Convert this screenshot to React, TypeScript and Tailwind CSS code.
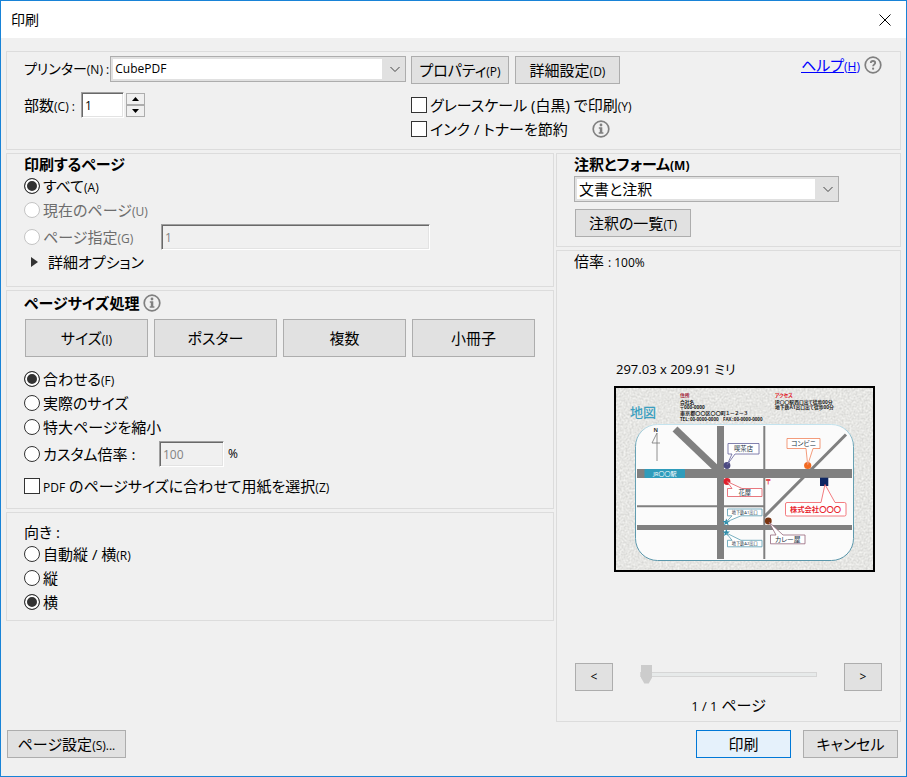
import { useState, type ReactNode } from "react";
import { clsx } from "clsx";

function Key(props: { children: ReactNode }) {
  return <span className="text-xs">({props.children})</span>;
}

function Panel(props: { children: ReactNode; className?: string }) {
  return (
    <section
      className={clsx("border border-[#dcdcdc] px-[17px]", props.className)}
    >
      {props.children}
    </section>
  );
}

function PushButton(props: {
  children: ReactNode;
  className?: string;
  primary?: boolean;
}) {
  return (
    <button
      type="button"
      className={clsx(
        "flex shrink-0 items-center justify-center border whitespace-nowrap",
        props.primary
          ? "border-[#0078d7] bg-[#e5f1fb]"
          : "border-[#adadad] bg-[#e1e1e1]",
        props.className,
      )}
    >
      <span>{props.children}</span>
    </button>
  );
}

function Radio(props: {
  name: string;
  value: string;
  checked: boolean;
  onChange: (value: string) => void;
  disabled?: boolean;
  className?: string;
  children: ReactNode;
}) {
  return (
    <label
      className={clsx(
        "flex items-center gap-[3px]",
        props.disabled && "text-[#6d6d6d]",
        props.className ?? "h-6",
      )}
    >
      <input
        type="radio"
        name={props.name}
        value={props.value}
        checked={props.checked}
        disabled={props.disabled}
        onChange={() => props.onChange(props.value)}
        className="size-4 shrink-0 appearance-none rounded-full border border-[#333] bg-white checked:bg-[#333] checked:shadow-[inset_0_0_0_2px_#fff] disabled:border-[#c4c4c4]"
      />
      <span>{props.children}</span>
    </label>
  );
}

function CheckBox(props: { children: ReactNode; className?: string }) {
  return (
    <label
      className={clsx("flex items-center gap-[3px]", props.className ?? "h-6")}
    >
      <input
        type="checkbox"
        className="size-4 shrink-0 appearance-none border border-[#333] bg-white checked:bg-[#333] checked:shadow-[inset_0_0_0_3px_#fff]"
      />
      <span>{props.children}</span>
    </label>
  );
}

function ComboBox(props: {
  id: string;
  options: string[];
  className?: string;
  textClass?: string;
}) {
  return (
    <div
      className={clsx(
        "relative border border-[#adadad] bg-[#e1e1e1] p-[2px] pr-[23px]",
        props.className,
      )}
    >
      <select
        id={props.id}
        className={clsx(
          "block h-5 w-full appearance-none bg-white px-[2px] leading-5",
          props.textClass,
        )}
      >
        {props.options.map((option) => (
          <option key={option}>{option}</option>
        ))}
      </select>
      <svg
        className="pointer-events-none absolute top-2 right-1 h-2 w-3"
        viewBox="0 0 12 8"
        fill="none"
        stroke="#444"
      >
        <path d="M1.5 2 6 6.5 10.5 2" />
      </svg>
    </div>
  );
}

const sunken =
  "h-[26px] border border-t-[#a0a0a0] border-r-white border-b-white border-l-[#a0a0a0] px-[3px] shadow-[inset_1px_1px_0_#696969,inset_-1px_-1px_0_#e3e3e3]";

function InfoIcon() {
  return (
    <svg className="size-[18px] shrink-0" viewBox="0 0 18 18" fill="#808080">
      <circle cx="9" cy="9" r="7.8" fill="none" stroke="#808080" strokeWidth="1.7" />
      <circle cx="9" cy="5" r="1.4" />
      <path d="M6.8 7.3h3.5v4.9h1.1v1.5H6.7v-1.5h1.1V8.7h-1z" />
    </svg>
  );
}

function HelpIcon() {
  return (
    <svg className="size-[18px]" viewBox="0 0 18 18" fill="none" stroke="#808080">
      <circle cx="9" cy="9" r="7.8" strokeWidth="1.7" />
      <path
        d="M6.8 7.1c0-1.3.9-2.1 2.2-2.1s2.2.7 2.2 1.9c0 1.4-2.1 1.6-2.1 3.4"
        strokeWidth="1.8"
      />
      <circle cx="9.1" cy="12.7" r="1.1" fill="#808080" stroke="none" />
    </svg>
  );
}

function MapPreview() {
  return (
    <svg
      className="h-[186px] w-[261px]"
      viewBox="0 0 261 186"
      role="img"
      aria-label="地図"
    >
      <defs>
        <filter
          id="paper"
          x="0"
          y="0"
          width="100%"
          height="100%"
          colorInterpolationFilters="sRGB"
        >
          <feTurbulence type="fractalNoise" baseFrequency="0.5" numOctaves="2" />
          <feColorMatrix values="0.2 0 0 0 0.8  0.2 0 0 0 0.8  0.2 0 0 0 0.79  0 0 0 0 1" />
        </filter>
        <linearGradient id="frame" x1="0" y1="0" x2="0" y2="1">
          <stop offset="0" stopColor="#c4e3ee" />
          <stop offset="0.15" stopColor="#6aa3b5" />
          <stop offset="1" stopColor="#5b97ab" />
        </linearGradient>
      </defs>
      <rect width="261" height="186" fill="#e6e6e4" />
      <rect width="261" height="186" filter="url(#paper)" />
      <rect x="1" y="1" width="259" height="184" fill="none" stroke="#000" strokeWidth="2" />

      <text x="16" y="30.5" fontSize="13" fontWeight="500" fill="#3b9fc0">
        地図
      </text>
      <g fontSize="4.8" fontWeight="700" fill="#222">
        <text x="66" y="11" fill="#a0102c">住所</text>
        <text x="66" y="18">会社名</text>
        <text x="66" y="23">〒000-0000</text>
        <text x="66" y="29" fontSize="5.1">東京都〇〇区〇〇町１－２－３</text>
        <text x="66" y="35" fontSize="4.5">TEL：00-0000-0000　FAX：00-0000-0000</text>
        <text x="161" y="11" fill="#e01020">アクセス</text>
        <text x="161" y="18">JR〇〇駅西口出て徒歩00分</text>
        <text x="161" y="23">地下鉄A1出口出て徒歩00分</text>
      </g>

      <rect x="21.5" y="38.5" width="218" height="136" rx="22" fill="#fbfbfb" stroke="url(#frame)" />
      <g fill="none" stroke="#808080">
        <path d="M23 87.4h215" strokeWidth="9" />
        <path d="M23 120.3h127" strokeWidth="2" />
        <path d="M23 141.4h215" strokeWidth="5" />
        <path d="M106.5 40v133" strokeWidth="7" />
        <path d="M150.3 40v133" strokeWidth="2" />
        <path d="M61 43 106 86" strokeWidth="7" />
        <path d="M232 48.5 150.5 130.5" strokeWidth="3" />
      </g>
      <text x="39.5" y="46" fontSize="5.5" fontWeight="700" fill="#333">N</text>
      <path d="M43 75V47L38 57h8" fill="none" stroke="#777" strokeWidth="0.8" />

      <rect x="30.5" y="83" width="40.5" height="9" rx="1" fill="#2f9cbb" />
      <text x="50.8" y="89.8" fontSize="6" fill="#fff" textAnchor="middle">JR〇〇駅</text>

      <circle cx="113" cy="79.5" r="3.4" fill="#4c4a80" />
      <circle cx="113" cy="95.5" r="3.4" fill="#e01f2c" />
      <circle cx="193.7" cy="79.5" r="3.6" fill="#f26a21" />
      <circle cx="154.3" cy="135" r="3.4" fill="#7a3410" />
      <rect x="206" y="91.7" width="8.3" height="8.3" fill="#0d2663" />
      <text x="151.5" y="98" fontSize="6.5" fontWeight="700" fill="#e01f2c">〒</text>
      <g fill="#2b8dab">
        <path d="m112.3 132.4 1 2.6h2.7l-2.2 1.7.9 2.8-2.4-1.7-2.4 1.7.9-2.8-2.2-1.7h2.7z" />
        <path d="m112.3 143 1 2.6h2.7l-2.2 1.7.9 2.8-2.4-1.7-2.4 1.7.9-2.8-2.2-1.7h2.7z" />
      </g>

      <g fill="#fff" strokeWidth="0.8" strokeLinejoin="round">
        <path d="M114 57.5h31v10.5h-24L113 79l5-11h-4z" stroke="#62619a" />
        <path d="M173 52.5h33v10h-7L193.7 79 192 62.5h-19z" stroke="#f0835a" />
        <path d="M113.5 102.5h4.5l-5-7 15 7h20v8h-34.5z" stroke="#e2565e" />
        <path d="M113.5 123h34.5v6.8h-21l-14.7 6.2 5.7-6.2h-4.5z" stroke="#559bb0" />
        <path d="M113.5 154.3h4.5l-5.7-7.3 14.7 7.3h21v6.5h-34.5z" stroke="#559bb0" />
        <path d="M156.5 149h5.5l-7-13 14 13h22v8.8h-34.5z" stroke="#94667a" />
        <path d="M173 116.5h34l4-18 10 18h9.5q1.5 0 1.5 1.5v10.5q0 1.5-1.5 1.5H173q-1.5 0-1.5-1.5V118q0-1.5 1.5-1.5z" stroke="#f05a60" />
      </g>
      <g fill="#234" textAnchor="middle">
        <text x="129.5" y="65" fontSize="6.3">喫茶店</text>
        <text x="189.5" y="59.8" fontSize="6.8">コンビニ</text>
        <text x="130.7" y="108.8" fontSize="6.3">花屋</text>
        <text x="130.7" y="128" fontSize="4.2">地下鉄A1出口</text>
        <text x="130.7" y="159.2" fontSize="4.2">地下鉄A2出口</text>
        <text x="173.7" y="155.7" fontSize="6.8">カレー屋</text>
        <text x="201.5" y="126" fontSize="7.3" fontWeight="700" fill="#e8262f">
          株式会社〇〇〇
        </text>
      </g>
    </svg>
  );
}

function PrinterPanel() {
  const [copies, setCopies] = useState(1);

  return (
    <Panel className="flex h-[99px] gap-[5px] pt-1">
      <div className="flex w-[382px] flex-col gap-[10px]">
        <div className="flex items-center gap-px">
          <label htmlFor="printer" className="text-sm whitespace-nowrap">
            プリンター<Key>N</Key>
            <span className="text-xs"> :</span>
          </label>
          <ComboBox
            id="printer"
            options={["CubePDF"]}
            className="flex-1"
            textClass="text-xs"
          />
        </div>
        <div className="flex items-center">
          <label htmlFor="copies" className="w-[57px] whitespace-nowrap">
            部数<Key>C</Key>
            <span className="text-xs"> :</span>
          </label>
          <input
            id="copies"
            value={copies}
            onChange={(e) => setCopies(Number(e.target.value) || 1)}
            className={clsx(sunken, "w-[43px] bg-white text-xs")}
          />
          <div className="ml-[2px] flex flex-col">
            <button
              type="button"
              aria-label="部数を増やす"
              onClick={() => setCopies(copies + 1)}
              className="flex h-3 w-[19px] items-center justify-center border border-[#adadad] bg-[#f0f0f0]"
            >
              <svg className="h-1 w-[7px]" viewBox="0 0 7 4">
                <path d="M0 4 3.5 0 7 4z" />
              </svg>
            </button>
            <button
              type="button"
              aria-label="部数を減らす"
              onClick={() => setCopies(Math.max(1, copies - 1))}
              className="flex h-3 w-[19px] items-center justify-center border border-[#adadad] bg-[#f0f0f0]"
            >
              <svg className="h-1 w-[7px]" viewBox="0 0 7 4">
                <path d="M0 0h7L3.5 4z" />
              </svg>
            </button>
          </div>
        </div>
      </div>
      <div className="flex-1">
        <div className="mb-[9px] flex gap-[6px]">
          <PushButton className="h-7 w-[98px]">
            プロパティ<Key>P</Key>
          </PushButton>
          <PushButton className="h-7 w-[105px]">
            詳細設定<Key>D</Key>
          </PushButton>
        </div>
        <CheckBox>
          グレースケール (白黒) で印刷<Key>Y</Key>
        </CheckBox>
        <div className="flex items-center gap-6">
          <CheckBox>インク / トナーを節約</CheckBox>
          <InfoIcon />
        </div>
      </div>
      <div className="flex h-[18px] items-center gap-1 pr-px">
        <a href="#help" className="text-[#0000ff] underline">
          ヘルプ<Key>H</Key>
        </a>
        <HelpIcon />
      </div>
    </Panel>
  );
}

function PageRangePanel() {
  const [range, setRange] = useState("all");

  return (
    <Panel className="pb-[14px]">
      <h2 className="h-5 font-bold">印刷するページ</h2>
      <Radio name="range" value="all" checked={range === "all"} onChange={setRange}>
        すべて<Key>A</Key>
      </Radio>
      <Radio
        name="range"
        value="current"
        checked={range === "current"}
        onChange={setRange}
        disabled
      >
        現在のページ<Key>U</Key>
      </Radio>
      <div className="flex h-[30px] items-center">
        <Radio
          name="range"
          value="pages"
          checked={range === "pages"}
          onChange={setRange}
          disabled
          className="h-6 w-[137px]"
        >
          ページ指定<Key>G</Key>
        </Radio>
        <input
          aria-label="ページ指定"
          disabled
          defaultValue="1"
          className={clsx(sunken, "w-[269px] bg-[#f0f0f0] text-xs text-[#838383]")}
        />
      </div>
      <button type="button" className="flex h-5 items-center gap-[9px] pl-[6px]">
        <svg className="h-3 w-[9px]" viewBox="0 0 9 12" fill="#333">
          <path d="M1 1v10l7-5z" />
        </svg>
        詳細オプション
      </button>
    </Panel>
  );
}

function PageSizePanel() {
  const [sizing, setSizing] = useState("fit");

  return (
    <Panel className="pb-[5px]">
      <div className="flex h-6 items-center gap-1">
        <h2 className="font-bold">ページサイズ処理</h2>
        <InfoIcon />
      </div>
      <div className="mx-px mt-1 mb-[10px] grid grid-cols-4 gap-[6px]">
        <PushButton className="h-[38px]">
          サイズ<Key>I</Key>
        </PushButton>
        <PushButton className="h-[38px]">ポスター</PushButton>
        <PushButton className="h-[38px]">複数</PushButton>
        <PushButton className="h-[38px]">小冊子</PushButton>
      </div>
      <Radio name="sizing" value="fit" checked={sizing === "fit"} onChange={setSizing}>
        合わせる<Key>F</Key>
      </Radio>
      <Radio
        name="sizing"
        value="actual"
        checked={sizing === "actual"}
        onChange={setSizing}
      >
        実際のサイズ
      </Radio>
      <Radio
        name="sizing"
        value="shrink"
        checked={sizing === "shrink"}
        onChange={setSizing}
      >
        特大ページを縮小
      </Radio>
      <div className="flex h-[30px] items-center">
        <Radio
          name="sizing"
          value="custom"
          checked={sizing === "custom"}
          onChange={setSizing}
          className="h-6 w-[135px]"
        >
          カスタム倍率 :
        </Radio>
        <input
          aria-label="カスタム倍率"
          disabled={sizing !== "custom"}
          defaultValue="100"
          className={clsx(sunken, "w-[65px] bg-[#f0f0f0] text-xs text-[#838383]")}
        />
        <span className="ml-1 text-xs">%</span>
      </div>
      <CheckBox className="h-[34px]">
        <span className="text-xs">PDF</span> のページサイズに合わせて用紙を選択
        <Key>Z</Key>
      </CheckBox>
    </Panel>
  );
}

function OrientationPanel() {
  const [orientation, setOrientation] = useState("landscape");

  return (
    <Panel className="pt-[9px] pb-[6px]">
      <h2 className="h-5">向き :</h2>
      <Radio
        name="orientation"
        value="auto"
        checked={orientation === "auto"}
        onChange={setOrientation}
      >
        自動縦 / 横<Key>R</Key>
      </Radio>
      <Radio
        name="orientation"
        value="portrait"
        checked={orientation === "portrait"}
        onChange={setOrientation}
      >
        縦
      </Radio>
      <Radio
        name="orientation"
        value="landscape"
        checked={orientation === "landscape"}
        onChange={setOrientation}
      >
        横
      </Radio>
    </Panel>
  );
}

function CommentsPanel() {
  return (
    <Panel className="pb-[9px]">
      <h2 className="h-5 font-bold">
        <label htmlFor="comments">
          注釈とフォーム<Key>M</Key>
        </label>
      </h2>
      <ComboBox
        id="comments"
        options={["文書と注釈"]}
        className="mt-[2px] mb-[7px] w-[265px]"
      />
      <PushButton className="ml-px h-7 w-[116px]">
        注釈の一覧<Key>T</Key>
      </PushButton>
    </Panel>
  );
}

function PreviewPanel() {
  return (
    <Panel className="flex flex-1 flex-col">
      <p className="h-5">
        倍率 <span className="text-xs">: 100%</span>
      </p>
      <figure className="flex flex-1 flex-col items-end justify-center pr-2 pt-2 pb-3">
        <figcaption className="mb-[7px] h-5 w-[259px] text-[13px] leading-5">
          297.03 x 209.91 ミリ
        </figcaption>
        <MapPreview />
      </figure>
      <div className="flex items-center px-px">
        <PushButton className="h-7 w-[38px] text-xs">&lt;</PushButton>
        <input
          type="range"
          aria-label="ページ"
          min={1}
          max={2}
          defaultValue={1}
          disabled
          className="mx-[27px] mb-[6px] h-5 min-w-0 flex-1 appearance-none bg-transparent [&::-webkit-slider-runnable-track]:h-[5px] [&::-webkit-slider-runnable-track]:border [&::-webkit-slider-runnable-track]:border-[#d6d6d6] [&::-webkit-slider-runnable-track]:bg-[#e7eaea] [&::-webkit-slider-thumb]:-mt-2 [&::-webkit-slider-thumb]:h-[19px] [&::-webkit-slider-thumb]:w-[11px] [&::-webkit-slider-thumb]:appearance-none [&::-webkit-slider-thumb]:bg-[#ccc] [&::-webkit-slider-thumb]:[clip-path:polygon(0_0,100%_0,100%_70%,70%_100%,30%_100%,0_70%)]"
        />
        <PushButton className="h-7 w-[38px] text-xs">&gt;</PushButton>
      </div>
      <p className="mt-1 mb-[6px] h-5 text-center">
        <span className="text-[13px]">1 / 1</span> ページ
      </p>
    </Panel>
  );
}

export default function App() {
  return (
    <main className="flex min-h-screen flex-col border border-[#1883d7] bg-[#f0f0f0] font-['Open_Sans','Noto_Sans_CJK_JP',sans-serif] text-[15px] leading-5 text-black [font-feature-settings:'palt']">
      <header className="flex h-[37px] items-center justify-between bg-white pr-[15px] pl-[10px]">
        <h1 className="text-sm">印刷</h1>
        <button type="button" aria-label="閉じる">
          <svg className="size-3" viewBox="0 0 12 12" stroke="#000">
            <path d="m.5.5 11 11m0-11-11 11" />
          </svg>
        </button>
      </header>
      <div className="flex flex-1 flex-col px-[5px] pt-[13px]">
        <PrinterPanel />
        <div className="mt-[3px] grid flex-1 grid-cols-[548fr_345fr] gap-[2px]">
          <div className="flex flex-col gap-[3px]">
            <PageRangePanel />
            <PageSizePanel />
            <OrientationPanel />
          </div>
          <div className="flex flex-col gap-[3px]">
            <CommentsPanel />
            <PreviewPanel />
          </div>
        </div>
      </div>
      <footer className="flex pt-2 pr-2 pb-[18px] pl-[6px]">
        <PushButton className="h-7 w-[119px]">
          ページ設定<Key>S</Key>
          <span className="text-xs">...</span>
        </PushButton>
        <div className="ml-auto flex gap-3">
          <PushButton primary className="h-7 w-[95px]">
            印刷
          </PushButton>
          <PushButton className="h-7 w-[95px]">キャンセル</PushButton>
        </div>
      </footer>
    </main>
  );
}
